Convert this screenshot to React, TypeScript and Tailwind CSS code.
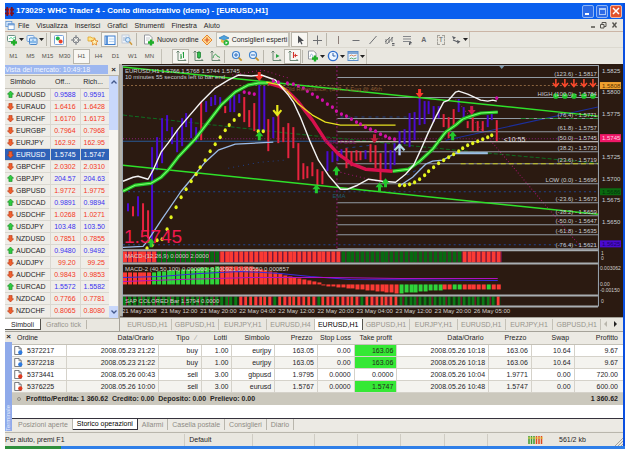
import { useState } from "react";
import type { ReactNode } from "react";
import { clsx } from "clsx";

type Point = [number, number];

interface Quote {
  symbol: string;
  bid: string;
  ask: string;
  up: boolean;
}

interface Trade {
  order: string;
  opened: string;
  type: "buy" | "sell";
  lots: string;
  symbol: string;
  price: string;
  stop: string;
  take: string;
  closed: string;
  closePrice: string;
  swap: string;
  profit: string;
}

const quote = (symbol: string, bid: string, ask: string, up = false): Quote => ({
  symbol,
  bid,
  ask,
  up,
});

const QUOTES: Quote[] = [
  quote("AUDUSD", "0.9588", "0.9591", true),
  quote("EURAUD", "1.6416", "1.6428"),
  quote("EURCHF", "1.6170", "1.6173"),
  quote("EURGBP", "0.7964", "0.7968"),
  quote("EURJPY", "162.92", "162.95"),
  quote("EURUSD", "1.5745", "1.5747"),
  quote("GBPCHF", "2.0302", "2.0310"),
  quote("GBPJPY", "204.57", "204.63", true),
  quote("GBPUSD", "1.9772", "1.9775"),
  quote("USDCAD", "0.9891", "0.9894", true),
  quote("USDCHF", "1.0268", "1.0271"),
  quote("USDJPY", "103.48", "103.50", true),
  quote("NZDUSD", "0.7851", "0.7855"),
  quote("AUDCAD", "0.9480", "0.9492", true),
  quote("AUDJPY", "99.20", "99.25"),
  quote("AUDCHF", "0.9843", "0.9853"),
  quote("EURCAD", "1.5572", "1.5582", true),
  quote("NZDCAD", "0.7766", "0.7781"),
  quote("NZDCHF", "0.8065", "0.8080"),
];

const TRADES: Trade[] = [
  {
    order: "5372217",
    opened: "2008.05.23 21:22",
    type: "buy",
    lots: "1.00",
    symbol: "eurjpy",
    price: "163.05",
    stop: "0.00",
    take: "163.06",
    closed: "2008.05.26 10:18",
    closePrice: "163.06",
    swap: "10.64",
    profit: "9.67",
  },
  {
    order: "5372218",
    opened: "2008.05.23 21:22",
    type: "buy",
    lots: "1.00",
    symbol: "eurjpy",
    price: "163.05",
    stop: "0.00",
    take: "163.06",
    closed: "2008.05.26 10:18",
    closePrice: "163.06",
    swap: "10.64",
    profit: "9.67",
  },
  {
    order: "5373441",
    opened: "2008.05.26 00:43",
    type: "sell",
    lots: "3.00",
    symbol: "gbpusd",
    price: "1.9795",
    stop: "0.0000",
    take: "0.0000",
    closed: "2008.05.26 10:04",
    closePrice: "1.9771",
    swap: "0.00",
    profit: "720.00",
  },
  {
    order: "5376225",
    opened: "2008.05.26 10:00",
    type: "sell",
    lots: "3.00",
    symbol: "eurusd",
    price: "1.5767",
    stop: "0.0000",
    take: "1.5747",
    closed: "2008.05.26 10:48",
    closePrice: "1.5747",
    swap: "0.00",
    profit: "600.00",
  },
];

const MENU = ["File", "Visualizza", "Inserisci", "Grafici", "Strumenti", "Finestra", "Aiuto"];
const PERIODS = ["M1", "M5", "M15", "M30", "H1", "H4", "D1", "W1", "MN"];
const CHART_TABS = [
  "EURUSD,H1",
  "GBPUSD,H1",
  "EURJPY,H1",
  "EURUSD,H4",
  "EURUSD,H1",
  "GBPUSD,H1",
  "EURJPY,H1",
  "EURUSD,H1",
  "EURJPY,H1",
  "GBPUSD,H1",
];
const TERMINAL_TABS = [
  "Posizioni aperte",
  "Storico operazioni",
  "Allarmi",
  "Casella postale",
  "Consiglieri",
  "Diario",
];

/* ---------- toolbar icons, all on a 12x12 grid ---------- */

const Icon = ({ children }: { children: ReactNode }) => (
  <svg viewBox="0 0 12 12" className="h-3 w-3 shrink-0" fill="none" aria-hidden="true">
    {children}
  </svg>
);

const GreenPlus = () => <path d="M8 5.5v6M5 8.5h6" stroke="#1fae28" strokeWidth="2.4" />;

const NewChartIcon = () => (
  <Icon>
    <rect x="1.5" y="1.5" width="8" height="6" rx="1" fill="#fff" stroke="#6f8f86" />
    <path d="M3 5l2-1.5 1.5 1L9 3" stroke="#5d9" />
    <GreenPlus />
  </Icon>
);

const ProfilesIcon = () => (
  <Icon>
    <rect x="1" y="1.5" width="7" height="6" rx="1" fill="#eaf4ff" stroke="#7ba6d8" />
    <rect x="3.5" y="4" width="7.5" height="6.5" rx="1" fill="#cfe5fb" stroke="#4b86c9" />
    <path d="M5 9V7M7 9V5.5M9 9V7" stroke="#3e8ed6" />
  </Icon>
);

const MarketWatchIcon = () => (
  <Icon>
    <rect x="1.5" y="1.5" width="9" height="9" rx="1" fill="#fff" stroke="#79a3dc" />
    <circle cx="4.800" cy="4.600" r="2" fill="#22b14c" />
    <circle cx="7.600" cy="7.600" r="2" fill="#e8432d" />
  </Icon>
);

const CrosshairIcon = () => (
  <Icon>
    <circle cx="6" cy="6" r="3" stroke="#7b7f86" />
    <path d="M6 1v10M1 6h10" stroke="#7b7f86" />
    <circle cx="6" cy="6" r="1.2" fill="#f4f3ee" />
  </Icon>
);

const NavigatorIcon = () => (
  <Icon>
    <path d="M1 3h3l1 1h3v3H1z" fill="#ffe48a" stroke="#e0a52a" strokeWidth=".8" />
    <path
      d="M7.5 4.5l1.1 2.2 2.4.3-1.8 1.6.5 2.4-2.2-1.2-2.2 1.2.5-2.4L4 7l2.4-.3z"
      fill="#fff5b8"
      stroke="#e58a2a"
      strokeWidth=".9"
    />
  </Icon>
);

const TerminalIcon = () => (
  <Icon>
    <rect x="1" y="2" width="10" height="8.5" fill="#f6fbff" stroke="#3e7fd0" />
    <path d="M3 2v8.5" stroke="#3e7fd0" strokeWidth="1.6" />
    <path d="M5 5h5M5 7.5h5" stroke="#bcd6f2" />
  </Icon>
);

const TesterIcon = () => (
  <Icon>
    <rect x="1" y="1" width="7" height="8" fill="#eef4fb" stroke="#b7c3d4" strokeWidth=".8" />
    <path d="M3 3v4M5 2.5V6" stroke="#9fb1c8" />
    <circle cx="6.8" cy="5.8" r="2.3" fill="#d8edff" stroke="#6a9fd4" />
    <path d="M8.5 7.8l2.5 3" stroke="#cf9a3c" strokeWidth="1.5" />
  </Icon>
);

const NewOrderIcon = () => (
  <Icon>
    <path d="M1.5 1h5L9 3.5V10H1.5z" fill="#fff" stroke="#8a8f96" strokeWidth=".9" />
    <path d="M3 4h4M3 6h3" stroke="#b8bcc2" strokeWidth=".8" />
    <GreenPlus />
  </Icon>
);

const MetaEditorIcon = () => (
  <Icon>
    <path d="M6 1l5 5-5 5-5-5z" fill="#ffd98c" stroke="#e8862c" />
    <path d="M6 3.5v5M3.5 6h5" stroke="#d9542b" strokeWidth="1.2" />
  </Icon>
);

const ExpertsIcon = () => (
  <Icon>
    <path d="M1 4l5-2.5L11 4 6 6.5z" fill="#4fa3df" stroke="#2d79b8" strokeWidth=".8" />
    <path d="M3 5v3c1.5 1.5 4.5 1.5 6 0V5L6 6.5z" fill="#e7b94d" />
    <circle cx="8.3" cy="8.8" r="2.7" fill="#28b43a" />
    <path d="M7.5 7.4v2.8L9.800 8.800z" fill="#fff" />
  </Icon>
);

const CursorIcon = () => (
  <Icon>
    <path d="M4 1.5v8l2-2 1.3 3 1.2-.6L7.2 7H10z" fill="#4a4d52" />
  </Icon>
);

const LineIcon = ({ d, stroke = "#6d6f73" }: { d: string; stroke?: string }) => (
  <Icon>
    <path d={d} stroke={stroke} strokeWidth="1" />
  </Icon>
);

const CrossIcon = () => <LineIcon d="M6.5 1.5v9M2 6.5h9" />;
const VerticalIcon = () => <LineIcon d="M5.5 2v8" stroke="#8b7d78" />;
const HorizontalIcon = () => <LineIcon d="M2.5 6.5h7" />;
const TrendIcon = () => <LineIcon d="M2.5 10l7-8" />;

const ChannelIcon = () => (
  <Icon>
    <path d="M1 8l5-5M3 10l6-7M2 5v5M5 4v5M8 3v5" stroke="#6d6f73" strokeWidth=".9" />
    <path d="M8 9.5h2.5M8 11.2h2.5" stroke="#4a4d52" strokeWidth=".9" />
  </Icon>
);

const FiboIcon = () => (
  <Icon>
    <path d="M2 2.5h8M2 5h8M2 7.5h8" stroke="#85878b" />
    <path d="M8.5 11V8.5h2.2M8.5 9.8h1.8" stroke="#4a4d52" strokeWidth=".9" />
  </Icon>
);

const TextIcon = () => <span className="text-[7px] font-bold text-[#66686c]">A</span>;

const LabelIcon = () => (
  <span className="border border-dashed border-[#a4a29b] px-px text-[7px] leading-[8px] text-[#66686c]">
    T
  </span>
);

const ArrowsIcon = () => (
  <Icon>
    <path d="M2 2l4 1.5-2.5 2zM7 6l3.5 1.5L7.5 10z" fill="#5d6066" />
    <path d="M3 6l5 2" stroke="#5d6066" strokeWidth="1.3" />
  </Icon>
);

const Axes = () => (
  <path d="M3 1v9.5h8M1.5 2.5L3 1l1.5 1.5M9.5 9L11 10.5" stroke="#5f7a68" strokeWidth=".9" />
);

const BarsIcon = () => (
  <Icon>
    <Axes />
    <path d="M6 4v5M8.5 2v6M6 7h1M7.5 3h1" stroke="#1f9c3c" />
  </Icon>
);

const CandlesIcon = () => (
  <Icon>
    <Axes />
    <path d="M7 1v8" stroke="#1f9c3c" />
    <rect x="5.5" y="2.5" width="3" height="5" fill="#2fbf4b" stroke="#167a2c" strokeWidth=".7" />
  </Icon>
);

const CurveIcon = () => (
  <Icon>
    <Axes />
    <path d="M4 8c1-4 3-5 4-2l3 1.5" stroke="#3da356" />
  </Icon>
);

const ZoomIcon = ({ plus = false }: { plus?: boolean }) => (
  <Icon>
    <circle cx="5" cy="5" r="3.5" fill="#e5f2ff" stroke="#3f83cf" strokeWidth="1.2" />
    <path d={plus ? "M5 3v4M3 5h4" : "M3 5h4"} stroke="#2f6fbd" />
    <path d="M7.7 7.7l3 3" stroke="#c8962f" strokeWidth="1.8" />
  </Icon>
);

const ScrollIcon = () => (
  <Icon>
    <Axes />
    <path d="M6 4v4l3.5-2z" fill="#27a443" />
  </Icon>
);

const ShiftIcon = () => (
  <Icon>
    <Axes />
    <path d="M6.5 2v6M10.5 5.5H8" stroke="#d2322a" strokeWidth="1.1" />
    <path d="M9 3.5v4L7 5.5z" fill="#d2322a" />
  </Icon>
);

const IndicatorsIcon = () => (
  <Icon>
    <path d="M1.5 1h5L9 3v6H1.5z" fill="#fff" stroke="#8a8f96" strokeWidth=".9" />
    <path d="M3 7c1-4 2-4 3 0" stroke="#7fa6c8" strokeWidth=".8" />
    <GreenPlus />
  </Icon>
);

const ClockIcon = () => (
  <Icon>
    <circle cx="6" cy="6" r="4.6" fill="#eef6ff" stroke="#2f6fce" strokeWidth="1.4" />
    <path d="M6 3v3h2.5" stroke="#2b5fa8" />
  </Icon>
);

const TemplateIcon = () => (
  <Icon>
    <rect x="1" y="1.5" width="10" height="9" fill="#eaf4ff" stroke="#5e8fc9" />
    <path d="M1 3h10" stroke="#5e8fc9" strokeWidth="1.5" />
    <path d="M2.5 6l2-1 2 1 3-1" stroke="#d0713b" strokeWidth=".8" />
    <path d="M2.5 9l2-1 2 1 3-1" stroke="#3b9c55" strokeWidth=".8" />
  </Icon>
);

const QuoteArrow = ({ up }: { up: boolean }) => (
  <svg viewBox="0 0 8 8" className="h-[7px] w-[7px] shrink-0" aria-hidden="true">
    <path
      d={up ? "M4 0l3.5 3.6H5.8V7.5H2.2V3.6H.5z" : "M4 8L.5 4.4h1.7V.5h3.6v3.9h1.7z"}
      fill={up ? "#2ecc40" : "#f0602f"}
      stroke={up ? "#14801f" : "#b3330f"}
      strokeWidth=".7"
    />
  </svg>
);

const OrderIcon = ({ type }: { type: Trade["type"] }) => (
  <svg viewBox="0 0 10 10" className="h-[9px] w-[9px] shrink-0" aria-hidden="true">
    <path d="M.8.5h4.7L8 3v6.5H.8z" fill="#fff" stroke="#55585e" strokeWidth=".9" />
    <path d="M5.5.5V3H8" fill="none" stroke="#55585e" strokeWidth=".7" />
    <circle cx="7" cy="7.2" r="2.4" fill={type === "buy" ? "#2f7be0" : "#e03a1f"} />
  </svg>
);

const ChartGlyph = () => (
  <svg viewBox="0 0 12 12" className="h-[9px] w-[10px] shrink-0" aria-hidden="true">
    <rect x=".5" y=".5" width="8" height="7" fill="#dcecff" stroke="#5a8fd0" />
    <rect x="3.5" y="3.5" width="8" height="8" fill="#fff" stroke="#5a8fd0" />
    <path d="M3 5h9" stroke="#5a8fd0" strokeWidth="1.5" />
  </svg>
);

/* ---------- toolbar parts ---------- */

interface ToolProps {
  label: string;
  pressed?: boolean;
  caret?: boolean;
  children: ReactNode;
}

const Tool = ({ label, pressed = false, caret = false, children }: ToolProps) => (
  <button
    type="button"
    aria-label={label}
    className={clsx(
      "flex h-[15px] shrink-0 items-center justify-center",
      caret ? "w-5" : "w-[17px]",
      pressed && "border border-[#b9b6ac] bg-[#f8f7f3]",
    )}
  >
    {children}
    {caret && (
      <svg viewBox="0 0 5 3" className="ml-px h-[3px] w-[5px]" aria-hidden="true">
        <path d="M0 0h5L2.5 3z" fill="#222" />
      </svg>
    )}
  </button>
);

const Divider = () => (
  <span className="mx-px flex h-[13px] w-[3px] shrink-0 border-l border-[#b9b6ac]" />
);

const TitleBar = () => (
  <header className="flex h-4 items-center gap-[2px] bg-[#0a5fee] pr-px text-white">
    <svg viewBox="0 0 10 10" className="h-[9px] w-[9px]" aria-hidden="true">
      <path d="M2.5 0v10M7.5 0v10M0 3h10M0 7h10" stroke="#7c1020" strokeWidth="2" />
      <path d="M5 1v8" stroke="#f4493a" strokeWidth="1.5" />
    </svg>
    <h1 className="flex-1 truncate text-[8px] font-bold leading-[14px]">
      173029: WHC Trader 4 - Conto dimostrativo (demo) - [EURUSD,H1]
    </h1>
    <div className="flex gap-[2px]">
      <button
        type="button"
        aria-label="Riduci"
        className="flex h-[13px] w-3 items-end rounded-[2px] border border-[#8fb5f5] bg-[#2d6be6] p-[2px]"
      >
        <span className="h-[2px] w-1 bg-white" />
      </button>
      <button
        type="button"
        aria-label="Ingrandisci"
        className="flex h-[13px] w-3 items-center justify-center rounded-[2px] border border-[#8fb5f5] bg-[#2d6be6]"
      >
        <span className="h-[7px] w-[7px] border border-t-2 border-[#a9c6f8]" />
      </button>
      <button
        type="button"
        aria-label="Chiudi"
        className="flex h-[13px] w-3 items-center justify-center rounded-[2px] border border-[#f4b6a4] bg-[#e2522c]"
      >
        <svg viewBox="0 0 8 8" className="h-2 w-2" aria-hidden="true">
          <path d="M1 1l6 6M7 1L1 7" stroke="#fff" strokeWidth="1.5" />
        </svg>
      </button>
    </div>
  </header>
);

const MenuBar = () => (
  <nav className="flex h-[13px] items-center border-b border-[#cbb5a6] pr-[5px]">
    <ChartGlyph />
    <ul className="flex flex-1 gap-[7px] pl-[3px]">
      {MENU.map((item) => (
        <li key={item}>
          <button type="button">{item}</button>
        </li>
      ))}
    </ul>
    <svg viewBox="0 0 28 8" className="h-2 w-7" fill="none" stroke="#55534d" aria-hidden="true">
      <path d="M1 6h4" strokeWidth="1.5" />
      <path d="M12 3.5V1.5h4v4h-2M10.5 3.5h3.5v3.5h-3.5z" />
      <path d="M22.5 1.5l4 5M26.5 1.5l-4 5" strokeWidth="1.3" />
    </svg>
  </nav>
);

const MainToolbar = () => (
  <div className="flex h-4 items-center border-b border-[#dcd9d0]">
    <div className="flex items-center border-r border-[#c4c1b7]">
      <Tool label="Nuovo grafico" caret>
        <NewChartIcon />
      </Tool>
      <Tool label="Profili" caret>
        <ProfilesIcon />
      </Tool>
      <Divider />
      <Tool label="Vista del mercato" pressed>
        <MarketWatchIcon />
      </Tool>
      <Tool label="Finestra dati">
        <CrosshairIcon />
      </Tool>
      <Tool label="Navigatore">
        <NavigatorIcon />
      </Tool>
      <Tool label="Terminale" pressed>
        <TerminalIcon />
      </Tool>
      <Tool label="Tester">
        <TesterIcon />
      </Tool>
      <Divider />
      <button type="button" className="flex items-center gap-[2px] pl-[3px]">
        <NewOrderIcon />
        Nuovo ordine
      </button>
      <Tool label="MetaEditor">
        <MetaEditorIcon />
      </Tool>
      <button
        type="button"
        className="flex h-[15px] items-center gap-[2px] border border-[#c4c1b7] bg-[#f4f3ee] px-px"
      >
        <ExpertsIcon />
        Consiglieri esperti
      </button>
    </div>
    <div className="flex items-center border-r border-[#c4c1b7] pl-px">
      <Tool label="Cursore" pressed>
        <CursorIcon />
      </Tool>
      <Tool label="Mirino">
        <CrossIcon />
      </Tool>
      <Divider />
      <Tool label="Linea verticale">
        <VerticalIcon />
      </Tool>
      <Tool label="Linea orizzontale">
        <HorizontalIcon />
      </Tool>
      <Tool label="Linea di tendenza">
        <TrendIcon />
      </Tool>
      <Tool label="Canale">
        <ChannelIcon />
      </Tool>
      <Tool label="Fibonacci">
        <FiboIcon />
      </Tool>
      <Tool label="Testo">
        <TextIcon />
      </Tool>
      <Tool label="Etichetta">
        <LabelIcon />
      </Tool>
      <Tool label="Frecce" caret>
        <ArrowsIcon />
      </Tool>
    </div>
  </div>
);

const PeriodToolbar = () => {
  const [period, setPeriod] = useState("H1");

  return (
    <div className="flex h-4 items-center">
      <div className="flex items-center border-r border-[#c4c1b7] pr-[3px]">
        {PERIODS.map((item) => (
          <button
            key={item}
            type="button"
            onClick={() => setPeriod(item)}
            className={clsx(
              "h-[15px] w-[17px] text-[6px] text-[#55534d]",
              item === period && "border border-[#b9b6ac] bg-[#f8f7f3]",
            )}
          >
            {item}
          </button>
        ))}
      </div>
      <div className="flex items-center border-r border-[#c4c1b7] pl-[10px]">
        <Tool label="Barre" pressed>
          <BarsIcon />
        </Tool>
        <Tool label="Candele">
          <CandlesIcon />
        </Tool>
        <Tool label="Linea">
          <CurveIcon />
        </Tool>
        <Divider />
        <Tool label="Zoom avanti">
          <ZoomIcon plus />
        </Tool>
        <Tool label="Zoom indietro">
          <ZoomIcon />
        </Tool>
        <Divider />
        <Tool label="Scorrimento automatico">
          <ScrollIcon />
        </Tool>
        <Tool label="Sposta grafico" pressed>
          <ShiftIcon />
        </Tool>
        <Divider />
        <Tool label="Indicatori" caret>
          <IndicatorsIcon />
        </Tool>
        <Tool label="Periodicità" caret>
          <ClockIcon />
        </Tool>
        <Tool label="Modelli" caret>
          <TemplateIcon />
        </Tool>
      </div>
    </div>
  );
};

/* ---------- market watch ---------- */

const MarketWatch = () => {
  const [selected, setSelected] = useState("EURUSD");

  return (
    <aside className="flex w-[115px] shrink-0 flex-col border-r border-[#a5a299]">
      <div className="flex h-[11px] items-center">
        <h2 className="flex-1 truncate bg-[#9db7f0] text-[#f2f6ff]">Vista del mercato: 10:49:18</h2>
        <button type="button" aria-label="Chiudi" className="w-[11px] text-[8px] font-bold">
          ×
        </button>
      </div>
      <div className="flex flex-1 border border-l-0 border-[#b9b6ac] bg-white">
        <table className="flex-1 border-collapse bg-[#efede8] text-right">
          <thead>
            <tr className="h-3 bg-[#e9e7e0]">
              <th className="border-b border-[#c4c1b7] pl-[5px] text-left font-normal">Simbolo</th>
              <th className="border-b border-[#c4c1b7] pr-[10px] font-normal">Off...</th>
              <th className="border-b border-[#c4c1b7] pr-[6px] font-normal">Rich...</th>
            </tr>
          </thead>
          <tbody>
            {QUOTES.map((item) => {
              const active = item.symbol === selected;
              const tone = active ? "text-white" : item.up ? "text-[#3a32f0]" : "text-[#f5371c]";
              return (
                <tr
                  key={item.symbol}
                  onClick={() => setSelected(item.symbol)}
                  className={clsx("h-3 border-b border-[#dad8d1]", active && "bg-[#2f62b8] text-white")}
                >
                  <td className="pl-[2px]">
                    <span className="flex items-center gap-[2px]">
                      <QuoteArrow up={item.up} />
                      {item.symbol}
                    </span>
                  </td>
                  <td className={clsx("border-l border-[#dad8d1] pr-1", tone)}>{item.bid}</td>
                  <td className={clsx("border-l border-[#dad8d1] pr-1", tone)}>{item.ask}</td>
                </tr>
              );
            })}
          </tbody>
        </table>
        <div className="flex w-[9px] flex-col justify-between bg-[#f6f5f1]">
          <div className="flex h-[54px] flex-col bg-[#c9d8fb]">
            <button type="button" aria-label="Su" className="flex h-3 items-center justify-center">
              <svg viewBox="0 0 6 4" className="h-1 w-[6px]" fill="none" aria-hidden="true">
                <path d="M.5 3.5L3 1l2.5 2.5" stroke="#44598c" strokeWidth="1.3" />
              </svg>
            </button>
          </div>
          <button
            type="button"
            aria-label="Giù"
            className="flex h-3 items-center justify-center bg-[#c9d8fb]"
          >
            <svg viewBox="0 0 6 4" className="h-1 w-[6px]" fill="none" aria-hidden="true">
              <path d="M.5.5L3 3 5.5.5" stroke="#44598c" strokeWidth="1.3" />
            </svg>
          </button>
        </div>
      </div>
      <div className="flex h-3 items-center">
        <button type="button" className="h-[11px] border-b border-r border-[#55534d] bg-white px-[6px]">
          Simboli
        </button>
        <button type="button" className="border-r border-[#b9b6ac] px-[5px] text-[#98958d]">
          Grafico tick
        </button>
      </div>
    </aside>
  );
};

/* ---------- chart ---------- */

const BLUE = "#4a0ad0";
const RED = "#e8233f";

// x, high, low
const BULL_BARS: [number, number, number][] = [
  [128, 203, 211],
  [138, 196, 216],
  [152, 147, 246],
  [157, 137, 170],
  [162, 118, 163],
  [167, 115, 131],
  [172, 127, 144],
  [177, 130, 152],
  [182, 118, 146],
  [186, 113, 127],
  [191, 118, 138],
  [196, 127, 142],
  [206, 101, 112],
  [211, 97, 106],
  [215, 95, 105],
  [220, 97, 106],
  [230, 95, 112],
  [234, 95, 112],
  [239, 94, 103],
  [259, 80, 130],
  [264, 86, 131],
  [273, 117, 138],
  [327, 151, 171],
  [332, 151, 162],
  [337, 153, 161],
  [341, 149, 158],
  [365, 150, 159],
  [385, 143, 170],
  [390, 150, 169],
  [394, 143, 165],
  [399, 131, 155],
  [404, 129, 144],
  [409, 113, 147],
  [414, 112, 140],
  [419, 98, 125],
  [424, 101, 124],
  [428, 101, 114],
  [433, 106, 122],
  [438, 106, 118],
  [458, 99, 112],
  [463, 107, 120],
  [487, 115, 127],
  [491, 113, 120],
];

const BEAR_BARS: [number, number, number][] = [
  [133, 206, 216],
  [143, 203, 231],
  [148, 210, 238],
  [201, 102, 140],
  [225, 106, 113],
  [244, 97, 122],
  [249, 110, 127],
  [254, 103, 131],
  [268, 119, 151],
  [278, 112, 143],
  [283, 127, 142],
  [288, 123, 158],
  [293, 127, 148],
  [298, 143, 180],
  [303, 163, 179],
  [307, 166, 178],
  [312, 162, 176],
  [317, 169, 185],
  [322, 171, 184],
  [346, 148, 168],
  [351, 151, 166],
  [356, 150, 161],
  [360, 151, 160],
  [370, 144, 162],
  [375, 145, 168],
  [380, 153, 180],
  [443, 114, 127],
  [448, 117, 138],
  [453, 109, 128],
  [467, 121, 128],
  [472, 117, 131],
  [477, 121, 131],
  [482, 121, 131],
  [496, 120, 141],
];

const UPPER_BAND: Point[] = [
  [123, 181], [128, 179], [133, 177], [138, 176], [148, 179], [153, 170], [161, 152], [168, 143],
  [178, 129], [188, 117], [201, 102], [215, 88], [228, 80], [238, 75], [251, 76], [261, 75],
  [275, 80], [281, 87], [288, 95], [293, 102], [300, 117], [310, 142], [318, 160], [328, 175],
  [340, 189], [347, 189], [357, 185], [368, 179], [382, 181], [395, 182], [405, 174], [413, 165],
  [420, 150], [427, 134], [435, 117], [443, 102], [448, 100], [455, 92], [458, 91], [467, 94],
  [480, 100], [487, 101], [492, 100], [496, 101],
];

const GREEN_START: Point[] = [
  [123, 191], [135, 185], [151, 183], [161, 177], [168, 170], [178, 157], [195, 139], [208, 122],
  [221, 105], [235, 92], [248, 85], [258, 83], [268, 83],
];

const MAGENTA_MID: Point[] = [
  [268, 83], [278, 86], [286, 90], [298, 102], [312, 120], [325, 140], [338, 154], [352, 164],
  [365, 169], [378, 170], [392, 171],
];

const GREEN_END: Point[] = [
  [392, 171], [408, 169], [418, 162], [432, 149], [445, 132], [455, 125], [462, 119], [470, 116],
  [480, 113], [497, 112],
];

const YELLOW_LINE: Point[] = [
  [266, 82], [280, 85], [286, 90], [298, 104], [312, 115], [325, 122], [340, 125], [395, 125],
];

const LOWER_BAND: Point[] = [
  [123, 247], [143, 246], [148, 240], [161, 220], [181, 191], [191, 179], [205, 162], [218, 150],
  [235, 144], [273, 142],
];

const LOWER_BAND_END: Point[] = [
  [400, 185], [412, 177], [425, 164], [432, 161], [442, 160], [455, 153], [487, 153],
];

const YELLOW_DOTS: Point[] = [
  [147, 248], [152, 245], [157, 240], [162, 239], [167, 229], [171, 217], [176, 207], [181, 197],
  [186, 189], [191, 181], [196, 174], [200, 167], [205, 160], [210, 151], [215, 144], [220, 137],
  [225, 130], [229, 125], [234, 120], [239, 115], [258, 131], [263, 131], [399, 185], [404, 185],
  [409, 184], [414, 182], [419, 179], [424, 175], [428, 171], [433, 167], [438, 163], [443, 160],
  [448, 157], [453, 154], [458, 151], [462, 148], [467, 145], [472, 143], [477, 141], [482, 139],
  [487, 137], [491, 135],
];

const MAGENTA_DOTS: Point[] = [
  [244, 92], [249, 93], [254, 94], [273, 81], [278, 82], [287, 83], [293, 84], [298, 86],
  [303, 88], [307, 91], [312, 94], [317, 97], [322, 100], [327, 104], [332, 107], [336, 111],
  [341, 114], [346, 116], [351, 119], [356, 122], [360, 124], [365, 127], [370, 129], [375, 131],
  [380, 134], [385, 136], [389, 138], [394, 139], [496, 98],
];

const FIBO_LEVELS = [
  { y: 77, label: "(123.6) -  1.5817" },
  { y: 97, label: "HIGH (100.0) -  1.5784" },
  { y: 118, label: "(76.4) -  1.5771" },
  { y: 131, label: "(61.8) -  1.5757" },
  { y: 141, label: "(50.0) -  1.5745" },
  { y: 151, label: "(38.2) -  1.5733" },
  { y: 163, label: "(23.6) -  1.5719" },
  { y: 183, label: "LOW (0.0) -  1.5696" },
  { y: 202, label: "(-23.6) -  1.5673" },
  { y: 215, label: "(-38.2) -  1.5659" },
  { y: 224, label: "(-50.0) -  1.5647" },
  { y: 234, label: "(-61.8) -  1.5635" },
  { y: 248, label: "(-76.4) -  1.5621" },
];

const PRICES = [
  { y: 71, label: "1.5825" },
  { y: 92, label: "1.5800" },
  { y: 114, label: "1.5775" },
  { y: 157, label: "1.5725" },
  { y: 179, label: "1.5700" },
  { y: 200, label: "1.5675" },
  { y: 222, label: "1.5650" },
];

const PRICE_TAGS = [
  { y: 82, h: 7, label: "1.5808", fill: "#f0a030", text: "#5a3200" },
  { y: 134, h: 8, label: "1.5745", fill: "#f01868", text: "#ffd0e0" },
  { y: 188, h: 7, label: "1.5686", fill: "#0a6a10", text: "#04300a" },
  { y: 240, h: 7, label: "1.5625", fill: "#4a0ad0", text: "#1c0466" },
];

const DATES = [
  "21 May 2008",
  "21 May 12:00",
  "21 May 20:00",
  "22 May 04:00",
  "22 May 12:00",
  "22 May 20:00",
  "23 May 04:00",
  "23 May 12:00",
  "23 May 20:00",
  "26 May 05:00",
];

// One histogram column per hourly bar
const COLUMNS = Array.from({ length: 78 }, (_, index) => Math.round(123 + index * 4.84));

const macdFill = (x: number) => {
  if (x < 154 || (x >= 218 && x < 337) || x >= 459) {
    return "#fb3a34";
  }
  return "#066a10";
};

const histogram = (x: number): { y: number; h: number; fill: string } => {
  if (x < 150) {
    return { y: 272, h: 12, fill: "#fb3a34" };
  }
  if (x < 217) {
    const y = Math.round(272 - (x - 150) / 11);
    return { y, h: 284 - y, fill: "#2fd43a" };
  }
  if (x < 318) {
    const y = x < 250 ? 266 : Math.round(267 + (x - 250) / 4.4);
    return { y: Math.min(y, 283), h: Math.max(284 - y, 1), fill: "#fb3a34" };
  }
  if (x < 397) {
    return { y: 284, h: Math.round(1 + (x - 318) / 9.8), fill: "#fb3a34" };
  }
  if (x < 440) {
    return { y: 284, h: Math.round(9 - (x - 397) / 12), fill: "#2fd43a" };
  }
  const green = (x > 449 && x < 459) || (x > 483 && x < 488);
  return { y: 284, h: 5, fill: green ? "#2fd43a" : "#fb3a34" };
};

const sapFill = (x: number, index: number) => {
  if (x < 235 || (x > 397 && x < 494)) {
    return "#0a7a14";
  }
  return index % 9 === 4 ? "#0a7a14" : "#fb3a34";
};

const toPoints = (points: Point[]) => points.map((point) => point.join(",")).join(" ");

const ArrowMark = ({ x, y, up, fill }: { x: number; y: number; up?: boolean; fill: string }) => (
  <path
    d={up ? `M${x} ${y}l4 5h-2.5v4h-3v-4h-2.5z` : `M${x} ${y}l4-5h-2.5v-4h-3v4h-2.5z`}
    fill={fill}
  />
);

const PriceChart = () => (
  <svg
    viewBox="120 64 502 252"
    className="block h-auto w-full bg-[#2b1a11] text-[6px]"
    role="img"
    aria-label="EURUSD,H1"
  >
    <rect x="120" y="64" width="2" height="252" fill="#b5b2a9" />
    <path d="M122 65.5H597.5V306M122.5 65V316" stroke="#9aa5b0" fill="none" />

    {/* dotted levels */}
    <g fill="none">
      <path d="M123 85.5H597" stroke="#8a6440" strokeDasharray="2 2" />
      <path d="M123 138.5H597" stroke="#8a1f7a" strokeDasharray="1 2" />
      <path d="M123 141H336" stroke="#2a5a96" />
      <path d="M123 191.5H597M123 244.5H597" stroke="#1f4590" strokeDasharray="2 3" />
      <path d="M123 115L288 133 455 150 597 163" stroke="#0f6d20" strokeDasharray="4 2" />
      <path d="M336.5 66V248" stroke="#8a1470" strokeDasharray="2 2" />
      <path d="M453 97L582 249" stroke="#a01468" strokeDasharray="1 2" />
      <path d="M445 140L597 107" stroke="#1c2f9c" />
      <path d="M228 168L260 162 284 160M280 82L300 88" stroke="#1f3f86" strokeDasharray="1 4" />
      <path d="M340 117H410M345 148L372 145M400 178L420 168" stroke="#1f3f86" strokeDasharray="3 4" />
      <path d="M232 75L262 70 288 78M340 172L380 182" stroke="#a01478" strokeDasharray="1 3" />
    </g>

    {/* Fibonacci grid */}
    <g>
      {FIBO_LEVELS.map((level) => (
        <path
          key={level.y}
          d={`M337 ${level.y + 0.5}H597`}
          stroke={level.y === 141 ? "#e6e6e6" : "#929aa3"}
        />
      ))}
    </g>
    <path d="M460 163.5H597" stroke="#c8c81c" strokeDasharray="5 3" />
    <path d="M520 118.5H597" stroke="#2c8a3c" strokeDasharray="5 3" />
    <path d="M455 153H487" stroke="#9cc8dc" strokeWidth="2" />

    {/* price bars */}
    <g stroke={BLUE} strokeWidth="2">
      {BULL_BARS.map(([x, high, low]) => (
        <path key={x} d={`M${x} ${high}V${low}`} />
      ))}
    </g>
    <g stroke={RED} strokeWidth="2">
      {BEAR_BARS.map(([x, high, low]) => (
        <path key={x} d={`M${x} ${high}V${low}`} />
      ))}
    </g>

    {/* channel */}
    <path d="M123 67L597 116M123 165L597 214" stroke="#2fe02a" strokeWidth="1.4" />

    {/* averages and bands */}
    <g fill="none" strokeLinejoin="round">
      <polyline points={toPoints(LOWER_BAND)} stroke="#9cbce8" strokeWidth="1.3" />
      <polyline points={toPoints(LOWER_BAND_END)} stroke="#9cbce8" strokeWidth="1.3" />
      <polyline points={toPoints(GREEN_START)} stroke="#1fbf22" strokeWidth="3.4" />
      <polyline points={toPoints(GREEN_START)} stroke="#7dff70" />
      <polyline points={toPoints(GREEN_END)} stroke="#1fbf22" strokeWidth="3.4" />
      <polyline points={toPoints(GREEN_END)} stroke="#7dff70" />
      <polyline points={toPoints(MAGENTA_MID)} stroke="#d8104e" strokeWidth="3.4" />
      <polyline points={toPoints(YELLOW_LINE)} stroke="#e6e020" strokeWidth="1.3" />
      <polyline points={toPoints(UPPER_BAND)} stroke="#f4f4f4" strokeWidth="1.4" />
    </g>

    <g fill="#e4f41c">
      {YELLOW_DOTS.map(([x, y]) => (
        <ellipse key={x} cx={x} cy={y} rx="1.6" ry="2" />
      ))}
    </g>
    <g fill="#d010a8">
      {MAGENTA_DOTS.map(([x, y]) => (
        <ellipse key={x} cx={x} cy={y} rx="1.6" ry="1.9" />
      ))}
    </g>

    {/* signals */}
    <ArrowMark x={259} y={81} fill="#f8382c" />
    <ArrowMark x={419} y={98} fill="#f8382c" />
    <ArrowMark x={374} y={143} fill="#c01c3c" />
    <ArrowMark x={471} y={115} fill="#c8184c" />
    <ArrowMark x={259} y={131} up fill="#22c82c" />
    <ArrowMark x={316} y={184} up fill="#22c82c" />
    <ArrowMark x={336} y={166} up fill="#22c82c" />
    <ArrowMark x={379} y={182} up fill="#22c82c" />
    <ArrowMark x={385} y={178} up fill="#22c82c" />
    <ArrowMark x={452} y={131} up fill="#22c82c" />
    <ArrowMark x={151} y={238} up fill="#22c82c" />
    <path d="M277 105v10M273 110l4 5 4-5" stroke="#e8e81c" strokeWidth="2.2" fill="none" />
    <path d="M399 155v-11M394 150l5-5 5 5" stroke="#b4dce0" strokeWidth="2.2" fill="none" />
    {[555, 564, 573, 583, 592].map((x) => (
      <g key={x}>
        <path d={`M${x} 79v7M${x - 3} 83l3 3.500 3-3.500`} stroke="#ff4a2c" strokeWidth="1.5" fill="none" />
        <circle cx={x} cy="96" r="2.8" fill="#22c82c" />
      </g>
    ))}
    <path d="M498.5 66h5l-2.5 3z" fill="#7c98ac" />

    {/* labels */}
    <g fill="#c9ced3">
      <text x="125" y="73">EURUSD,H1 1.5766 1.5768 1.5744 1.5745</text>
      <text x="125" y="79">10 minutes 55 seconds left to bar end</text>
      {FIBO_LEVELS.map((level) => (
        <text key={level.label} x="596" y={level.y - 1} textAnchor="end">
          {level.label}
        </text>
      ))}
      {PRICES.map((price) => (
        <text key={price.label} x="601" y={price.y + 2}>
          {price.label}
        </text>
      ))}
    </g>
    <text x="285" y="91" fill="#8a5a34">Old Resistance, (S.R. &amp; Eug @ 46th</text>
    <text x="324" y="144" fill="#7c1470">PERI FOOL</text>
    <text x="332" y="198" fill="#1f5a70">EMA</text>
    <text x="503" y="142" className="text-[7px]" fill="#e4e4e4">&lt;10:55</text>
    <text x="124" y="243" className="text-[19px]" fill="#f0184e">1.5745</text>
    {PRICE_TAGS.map((tag) => (
      <g key={tag.y}>
        <rect x="599" y={tag.y} width="21" height={tag.h} fill={tag.fill} />
        <text x="601" y={tag.y + 6} fill={tag.text}>
          {tag.label}
        </text>
      </g>
    ))}

    {/* indicator panes */}
    {COLUMNS.map((x, index) => {
      const column = histogram(x);
      return (
        <g key={x}>
          <rect x={x} y="251" width="4" height="11" fill={macdFill(x)} />
          <rect x={x + 4} y="251" width="1" height="11" fill="#7a1450" />
          <rect x={x} y={column.y} width="4" height={column.h} fill={column.fill} />
          <rect x={x} y="296" width="3" height="9" fill={sapFill(x, index)} />
          <rect x={x + 3} y="296" width="1" height="9" fill={index % 3 ? "#0b3a12" : "#8a1038"} />
        </g>
      );
    })}
    <g fill="none">
      <polyline points="123,277 160,276 200,273 240,271 280,273 310,276 350,279 497,280" stroke="#3a2ce0" />
      <polyline points="123,281 180,279 250,277 330,277 400,278 497,278" stroke="#b010c0" />
    </g>
    <path d="M122 250H597M122 263H597M122 295H597M122 306H597" stroke="#a9aeb2" strokeWidth="2" />
    <g fill="#d4d0cc">
      <text x="125" y="258">MACD-(12,26,9) 0.0000 2.0000</text>
      <text x="125" y="271">MACD-2 (40,50,100) 0.000000 -0.000921 0.000550 0.000857</text>
      <text x="125" y="303">SAP COLORED Bar 1.5794 0.0000</text>
      <g className="text-[5px]">
        <text x="600" y="255">1</text>
        <text x="600" y="260">0</text>
        <text x="599" y="270">0.003062</text>
        <text x="599" y="286">0.00</text>
        <text x="599" y="292">-0.00150</text>
        <text x="600" y="303">0</text>
      </g>
      {DATES.map((date, index) => (
        <text key={date} x={122 + index * 39} y="313">
          {date}
        </text>
      ))}
    </g>
  </svg>
);

const ChartPanel = () => {
  const [tab, setTab] = useState(4);

  return (
    <section className="flex min-w-0 flex-1 flex-col">
      <PriceChart />
      <div className="flex h-[14px] items-center border-t border-[#a5a299] pl-1 pr-[5px]">
        {CHART_TABS.map((name, index) => (
          <button
            key={index}
            type="button"
            onClick={() => setTab(index)}
            className={clsx(
              "h-[11px] flex-1 border-r",
              index === tab
                ? "border-[#55534d] bg-white text-black"
                : "border-[#c4c1b7] text-[#98958d]",
            )}
          >
            {name}
          </button>
        ))}
        <svg viewBox="0 0 14 6" className="ml-[3px] h-[6px] w-[14px]" aria-hidden="true">
          <path d="M3 0v6L0 3z" fill="#b9b6ac" />
          <path d="M10 0v6l3-3z" fill="#222" />
        </svg>
      </div>
    </section>
  );
};

/* ---------- terminal ---------- */

const TerminalPanel = () => {
  const [tab, setTab] = useState("Storico operazioni");
  const cell = "border-l border-[#d5d2ca] pr-[3px]";
  const head = "border-b border-[#c4c1b7] pr-[5px] font-normal";

  return (
    <section className="flex border-t border-[#a5a299]">
      <div className="flex w-[7px] flex-col bg-[#8faaea]">
        <button
          type="button"
          aria-label="Chiudi"
          className="h-[10px] bg-[#ece9e2] text-[8px] font-bold leading-[8px]"
        >
          ×
        </button>
        <h2 className="flex-1 rotate-180 text-[6px] leading-[7px] text-[#e9f0ff] [writing-mode:vertical-rl]">
          Terminale
        </h2>
      </div>
      <div className="flex min-w-0 flex-1 flex-col bg-white">
        <table className="w-full table-fixed border-collapse text-right">
          <colgroup>
            <col className="w-[9%]" />
            <col className="w-[15%]" />
            <col className="w-[7%]" />
            <col className="w-[5%]" />
            <col className="w-[7%]" />
            <col className="w-[7%]" />
            <col className="w-[6%]" />
            <col className="w-[7%]" />
            <col className="w-[15%]" />
            <col className="w-[7%]" />
            <col className="w-[7%]" />
            <col className="w-[8%]" />
          </colgroup>
          <thead>
            <tr className="h-[13px] bg-[#eceae4]">
              <th className="border-b border-[#c4c1b7] pl-[5px] text-left font-normal">Ordine</th>
              <th className={head}>Data/Orario</th>
              <th className={head}>
                Tipo <span className="text-[#98958d]">&nbsp; ∕</span>
              </th>
              <th className={head}>Lotti</th>
              <th className={head}>Simbolo</th>
              <th className={head}>Prezzo</th>
              <th className="whitespace-nowrap border-b border-[#c4c1b7] pr-[3px] font-normal">
                Stop Loss
              </th>
              <th className={head}>Take profit</th>
              <th className={head}>Data/Orario</th>
              <th className={head}>Prezzo</th>
              <th className={head}>Swap</th>
              <th className={head}>Profitto</th>
            </tr>
          </thead>
          <tbody>
            {TRADES.map((trade, index) => (
              <tr
                key={trade.order}
                className={clsx("h-3 border-b border-[#d5d2ca]", index % 2 === 1 && "bg-[#f4f3ef]")}
              >
                <td className="pl-[2px]">
                  <span className="flex items-center gap-1">
                    <OrderIcon type={trade.type} />
                    {trade.order}
                  </span>
                </td>
                <td className={cell}>{trade.opened}</td>
                <td className={cell}>{trade.type}</td>
                <td className={cell}>{trade.lots}</td>
                <td className={cell}>{trade.symbol}</td>
                <td className={cell}>{trade.price}</td>
                <td className={cell}>{trade.stop}</td>
                <td className={clsx(cell, trade.take !== "0.0000" && "bg-[#35e835]")}>{trade.take}</td>
                <td className={cell}>{trade.closed}</td>
                <td className={cell}>{trade.closePrice}</td>
                <td className={cell}>{trade.swap}</td>
                <td className="border-l border-[#d5d2ca] pr-[5px]">{trade.profit}</td>
              </tr>
            ))}
          </tbody>
          <tfoot>
            <tr className="h-3 bg-[#cbc8bd] font-bold">
              <td colSpan={11} className="pl-[5px] text-left">
                <span className="flex items-center gap-[5px]">
                  <span className="h-1 w-1 rounded-full border border-[#8e8b84]" />
                  Profitto/Perdita: 1 360.62&nbsp; Credito: 0.00&nbsp; Deposito: 0.00&nbsp; Prelievo: 0.00
                </span>
              </td>
              <td className="pr-[5px]">1 360.62</td>
            </tr>
          </tfoot>
        </table>
        <div className="mt-[13px] flex h-[13px] items-start border-t border-[#35323c] bg-[#eceae4] pl-[2px]">
          {TERMINAL_TABS.map((name) => (
            <button
              key={name}
              type="button"
              onClick={() => setTab(name)}
              className={clsx(
                "h-[11px] border-r px-1",
                name === tab
                  ? "border-b border-[#35323c] bg-white text-black"
                  : "border-[#b9b6ac] text-[#8e8b84]",
              )}
            >
              {name}
            </button>
          ))}
        </div>
      </div>
    </section>
  );
};

const StatusBar = () => (
  <footer className="flex h-[14px] items-center border-t border-[#b9b6ac]">
    <span className="w-[29%] truncate">Per aiuto, premi F1</span>
    <span className="flex h-3 w-[11%] items-center border-l border-[#cfccc3] pl-1">Default</span>
    <span className="h-3 w-[10%] border-l border-[#cfccc3]" />
    <span className="h-3 w-[7%] border-l border-[#cfccc3]" />
    <span className="h-3 w-[7%] border-l border-[#cfccc3]" />
    <span className="h-3 w-[7%] border-l border-[#cfccc3]" />
    <span className="h-3 w-[7%] border-l border-[#cfccc3]" />
    <span className="flex h-3 flex-1 items-center gap-4 border-l border-[#cfccc3] pl-[40px]">
      <svg viewBox="0 0 15 8" className="h-2 w-[15px]" aria-hidden="true">
        <path d="M1 0v8M3.5 0v8M6 0v8" stroke="#3c9a2c" strokeWidth="1.5" />
        <path d="M8.5 0v8M11 0v8M13.5 0v8" stroke="#e04a1c" strokeWidth="1.5" />
        <path d="M0 2h15" stroke="#e8d040" />
      </svg>
      561/2 kb
    </span>
    <svg viewBox="0 0 8 8" className="h-2 w-2 self-end" stroke="#a5a299" aria-hidden="true">
      <path d="M0 8l8-8M3 8l5-5M6 8l2-2" />
    </svg>
  </footer>
);

export const App = () => (
  <div className="flex min-h-screen flex-col bg-white pl-[5px] pt-[3px] font-['Liberation_Sans',sans-serif] text-[7px] leading-[9px] text-[#26241f]">
    <div className="flex flex-1 flex-col border-r-2 border-[#0a4fe0] bg-[#e9e7e0]">
      <TitleBar />
      <MenuBar />
      <MainToolbar />
      <PeriodToolbar />
      <main className="flex flex-1 flex-col">
        <div className="flex">
          <MarketWatch />
          <ChartPanel />
        </div>
        <TerminalPanel />
      </main>
      <StatusBar />
    </div>
    <div className="flex h-[3px] bg-[#2f7fe8]">
      <span className="w-[9%] bg-[#2f8f3c]" />
    </div>
  </div>
);

export default App;
